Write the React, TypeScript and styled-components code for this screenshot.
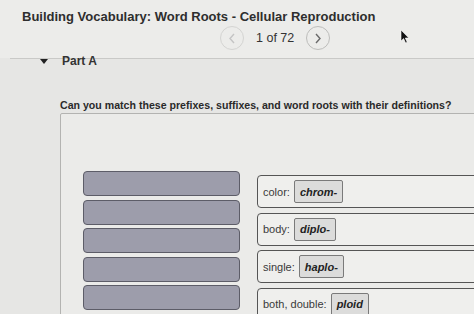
import React from 'react';
import styled, { createGlobalStyle } from 'styled-components';

const GlobalStyle = createGlobalStyle`
  html, body {
    margin: 0;
    padding: 0;
    width: 474px;
    height: 314px;
    overflow: hidden;
    background: #e6e6e4;
    font-family: 'Liberation Sans', Arial, sans-serif;
  }
`;

const Page = styled.div`
  position: relative;
  width: 474px;
  height: 314px;
  overflow: hidden;
`;

const Header = styled.header`
  background: #ececea;
  padding: 8px 0 0 22px;
  height: 58px;
  box-sizing: border-box;
`;

const Title = styled.h1`
  margin: 0;
  font-size: 13px;
  font-weight: bold;
  color: #2e2e2e;
  line-height: 17px;
`;

const Pager = styled.div`
  display: flex;
  align-items: center;
  gap: 11px;
  margin: 1px 0 0 198px;
`;

const NavCircle = styled.div<{ $disabled?: boolean }>`
  width: 22px;
  height: 22px;
  border-radius: 50%;
  border: 1px solid ${(p) => (p.$disabled ? '#d4d4d2' : '#bdbdbb')};
  display: flex;
  align-items: center;
  justify-content: center;
  color: ${(p) => (p.$disabled ? '#c4c4c4' : '#6a6a6a')};
`;

const PageText = styled.span`
  font-size: 12.5px;
  color: #333;
  margin: 0 1px;
`;

const Cursor = styled.svg`
  position: absolute;
  left: 400px;
  top: 29px;
`;

const Divider = styled.div`
  margin-left: 10px;
  border-top: 1px solid #c9c9c7;
`;

const PartRow = styled.div`
  display: flex;
  align-items: center;
  gap: 14px;
  margin: -4px 0 0 40px;
  height: 12px;
`;

const Triangle = styled.span`
  width: 0;
  height: 0;
  border-left: 4px solid transparent;
  border-right: 4px solid transparent;
  border-top: 5px solid #222;
`;

const PartLabel = styled.span`
  font-size: 12px;
  font-weight: bold;
  color: #333;
`;

const Question = styled.p`
  margin: 32px 0 0 60px;
  font-size: 10.6px;
  font-weight: bold;
  color: #2a2a2a;
  white-space: nowrap;
`;

const Panel = styled.div`
  margin: 2px 0 0 60px;
  width: 480px;
  height: 260px;
  background: #ebebe9;
  border: 1px solid #b3b3b1;
  border-radius: 2px;
  padding: 57px 0 0 22px;
  box-sizing: border-box;
  display: flex;
  gap: 17px;
  align-items: flex-start;
`;

const BarColumn = styled.div`
  display: flex;
  flex-direction: column;
  gap: 3.5px;
  width: 157px;
`;

const Bar = styled.div`
  height: 25px;
  background: #9d9dab;
  border: 1.5px solid #5d5d68;
  border-radius: 4px;
  box-sizing: border-box;
`;

const TargetColumn = styled.div`
  display: flex;
  flex-direction: column;
  gap: 4.5px;
  margin-top: 4px;
  width: 260px;
`;

const Target = styled.div`
  height: 33px;
  display: flex;
  align-items: center;
  gap: 4px;
  padding-left: 5px;
  border: 1.5px solid #555;
  border-radius: 4px;
  background: #efefed;
  box-sizing: border-box;
`;

const Definition = styled.span`
  font-size: 11px;
  color: #3a3a3a;
`;

const Chip = styled.span`
  display: flex;
  align-items: center;
  height: 23px;
  padding: 0 5px;
  border: 1px solid #7a7a7a;
  border-radius: 2px;
  background: #dcdcdb;
  font-size: 11px;
  font-weight: bold;
  font-style: italic;
  color: #222;
  box-sizing: border-box;
`;

const pairs: [string, string][] = [
  ['color:', 'chrom-'],
  ['body:', 'diplo-'],
  ['single:', 'haplo-'],
  ['both, double:', 'ploid'],
];

const Chevron = ({ left }: { left?: boolean }) => (
  <svg width="8" height="11" viewBox="0 0 8 11" fill="none" stroke="currentColor" strokeWidth="1.4">
    <path d={left ? 'M6 1 L2 5.5 L6 10' : 'M2 1 L6 5.5 L2 10'} />
  </svg>
);

const App: React.FC = () => {
  return (
    <>
      <GlobalStyle />
      <Page>
        <Header>
          <Title>Building Vocabulary: Word Roots - Cellular Reproduction</Title>
          <Pager>
            <NavCircle $disabled>
              <Chevron left />
            </NavCircle>
            <PageText>1 of 72</PageText>
            <NavCircle>
              <Chevron />
            </NavCircle>
          </Pager>
        </Header>
        <Divider />
        <PartRow>
          <Triangle />
          <PartLabel>Part A</PartLabel>
        </PartRow>
        <Question>Can you match these prefixes, suffixes, and word roots with their definitions?</Question>
        <Panel>
          <BarColumn>
            {Array.from({ length: 6 }).map((_, i) => (
              <Bar key={i} />
            ))}
          </BarColumn>
          <TargetColumn>
            {pairs.map(([def, root]) => (
              <Target key={root}>
                <Definition>{def}</Definition>
                <Chip>{root}</Chip>
              </Target>
            ))}
          </TargetColumn>
        </Panel>
        <Cursor width="10" height="15" viewBox="0 0 10 15">
          <path d="M1 1 L1 12 L3.6 9.6 L5.6 14 L7.2 13.3 L5.3 9 L8.8 9 Z" fill="#111" stroke="#fff" strokeWidth="0.6" />
        </Cursor>
      </Page>
    </>
  );
};

export default App;
